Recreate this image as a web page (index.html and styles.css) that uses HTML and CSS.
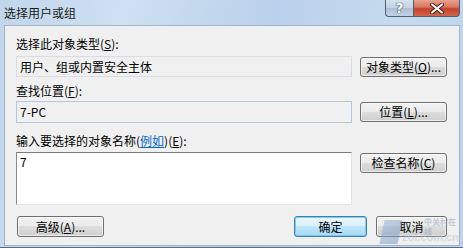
FILE: index.html
```html
<!DOCTYPE html>
<html lang="zh-CN">
<head>
<meta charset="utf-8">
<title>选择用户或组</title>
<link rel="stylesheet" href="styles.css">
</head>
<body>
<div class="window">
  <div class="titlebar">
    <span class="title">选择用户或组</span>
    <div class="caption-btns">
      <div class="cap help">?</div>
      <div class="cap close">
        <svg width="14" height="11" viewBox="0 0 14 11"><path d="M2 1.5 L12 9.5 M12 1.5 L2 9.5" stroke="#4a1a10" stroke-width="4" stroke-linecap="round"/><path d="M2 1.5 L12 9.5 M12 1.5 L2 9.5" stroke="#ffffff" stroke-width="2.2" stroke-linecap="round"/></svg>
      </div>
    </div>
  </div>
  <div class="client">
    <div class="label">选择此对象类型(<u>S</u>):</div>
    <div class="row r1">
      <div class="field ro">用户、组或内置安全主体</div>
      <button class="btn">对象类型(<u>O</u>)...</button>
    </div>
    <div class="label l2">查找位置(<u>F</u>):</div>
    <div class="row r2">
      <div class="field ro2">7-PC</div>
      <button class="btn">位置(<u>L</u>)...</button>
    </div>
    <div class="label l3">输入要选择的对象名称(<a class="link">例如</a>)(<u>E</u>):</div>
    <div class="row r3">
      <div class="field area">7</div>
      <button class="btn">检查名称(<u>C</u>)</button>
    </div>
    <div class="footer">
      <button class="btn adv">高级(<u>A</u>)...</button>
      <div class="spacer"></div>
      <button class="btn ok">确定</button>
      <button class="btn cancel">取消</button>
    </div>
  </div>
  <div class="watermark">
    <span class="wm-logo"></span>
    <span class="wm-cn">中关村在线</span>
    <span class="wm-en">zol.com.cn</span>
  </div>
</div>
</body>
</html>
```
FILE: styles.css
```css
* { box-sizing: border-box; }
html, body { margin: 0; padding: 0; }
body {
  width: 463px;
  height: 248px;
  overflow: hidden;
  font-family: "Noto Sans CJK SC", "Noto Sans", sans-serif;
  font-size: 12px;
  color: #000;
}
.window {
  position: relative;
  width: 463px;
  height: 248px;
  padding: 0 3px 1px 4px;
  background: linear-gradient(100deg, #c1d6ec 0%, #cfe0f2 25%, #b9d1ea 55%, #c6dbef 80%, #bcd3eb 100%);
  display: flex;
  flex-direction: column;
  border-bottom: 1px solid #5a6b80;
}
.titlebar {
  height: 26px;
  display: flex;
  align-items: flex-start;
  margin-left: -4px;
  margin-right: -3px;
}
.title {
  margin-left: 4px;
  margin-top: 5px;
  line-height: 16px;
  font-size: 12px;
  color: #1a1a1a;
}
.caption-btns {
  margin-left: auto;
  margin-right: 3px;
  display: flex;
  height: 17px;
}
.cap {
  height: 17px;
  display: flex;
  align-items: center;
  justify-content: center;
  border: 1px solid #4f5f73;
  border-top: none;
}
.help {
  width: 28px;
  border-radius: 0 0 0 4px;
  border-right: none;
  background: linear-gradient(#d7e2ee 0%, #c4d2e2 50%, #aebfd4 51%, #c2d2e4 100%);
  color: #fff;
  font-family: "DejaVu Sans", sans-serif;
  font-weight: bold;
  font-size: 14px;
  text-shadow: 0 0 1px #3a4a60, 0 0 1px #3a4a60, 0 0 1px #3a4a60;
  line-height: 17px;
}
.close {
  width: 47px;
  border-radius: 0 0 4px 0;
  background: linear-gradient(#e8a392 0%, #d8735b 45%, #c4422a 55%, #d2654d 100%);
}
.client {
  flex: 1;
  background: #f0f0f0;
  border: 1px solid #a3b2c4;
  padding: 11px 12px 8px 11px;
  display: flex;
  flex-direction: column;
}
.label {
  height: 14px;
  line-height: 14px;
  white-space: nowrap;
}
.l2 { margin-top: 7px; }
.l3 { margin-top: 11px; }
.link { color: #0066cc; text-decoration: underline; }
.row {
  display: flex;
  align-items: flex-start;
  gap: 8px;
}
.r1 { margin-top: 5px; }
.r2 { margin-top: 3px; }
.r3 { margin-top: 4px; }
.field {
  width: 336px;
  padding: 0 3px;
  white-space: nowrap;
}
.ro {
  height: 21px;
  line-height: 19px;
  background: #f0f0f0;
  border: 1px solid #d8dde3;
}
.ro2 {
  height: 22px;
  line-height: 19px;
  background: #f0f0f0;
  border: 1px solid #b4c8dd;
}
.area {
  height: 53px;
  line-height: 18px;
  background: #ffffff;
  border-top: 1px solid #7c7c7c;
  border-left: 1px solid #8a8a8a;
  border-right: 1px solid #dfe3e8;
  border-bottom: 1px solid #e3e7ec;
  padding-left: 3px;
}
.btn {
  width: 87px;
  height: 20px;
  margin: 1px 0 0 0;
  padding: 0;
  font-family: inherit;
  font-size: 12px;
  line-height: 18px;
  color: #000;
  border: 1px solid #707070;
  border-radius: 3px;
  background: linear-gradient(#f2f2f2 0%, #ebebeb 49%, #dddddd 50%, #cfcfcf 100%);
  box-shadow: inset 0 0 0 1px rgba(255,255,255,0.6);
  white-space: nowrap;
  text-align: center;
}
.footer {
  margin-top: 11px;
  display: flex;
  align-items: flex-start;
}
.footer .btn { margin-top: 0; height: 21px; }
.adv { margin-left: 1px !important; }
.spacer { flex: 1; }
.ok {
  width: 73px;
  border-color: #3c7fb1;
  background: linear-gradient(#eaf6fd 0%, #d9f0fc 49%, #bee6fd 50%, #a7d9f5 100%);
  box-shadow: inset 0 0 0 1px rgba(120,200,240,0.9);
}
.cancel { width: 71px; margin-left: 9px !important; }
.watermark {
  position: absolute;
  left: 380px;
  top: 214px;
  width: 83px;
  height: 34px;
  pointer-events: none;
  opacity: 0.5;
}
.wm-logo {
  position: absolute;
  left: 2px;
  top: 6px;
  width: 18px;
  height: 24px;
  background: linear-gradient(135deg, #8fb3d6, #6d93bf);
  transform: skewX(-12deg);
}
.wm-cn {
  position: absolute;
  left: 44px;
  top: 3px;
  font-size: 8px;
  line-height: 10px;
  color: #8fa4ba;
  font-weight: bold;
}
.wm-en {
  position: absolute;
  left: 22px;
  top: 17px;
  font-family: "Liberation Sans", sans-serif;
  font-size: 11px;
  font-weight: bold;
  line-height: 12px;
  color: #b8c6d4;
}
```
